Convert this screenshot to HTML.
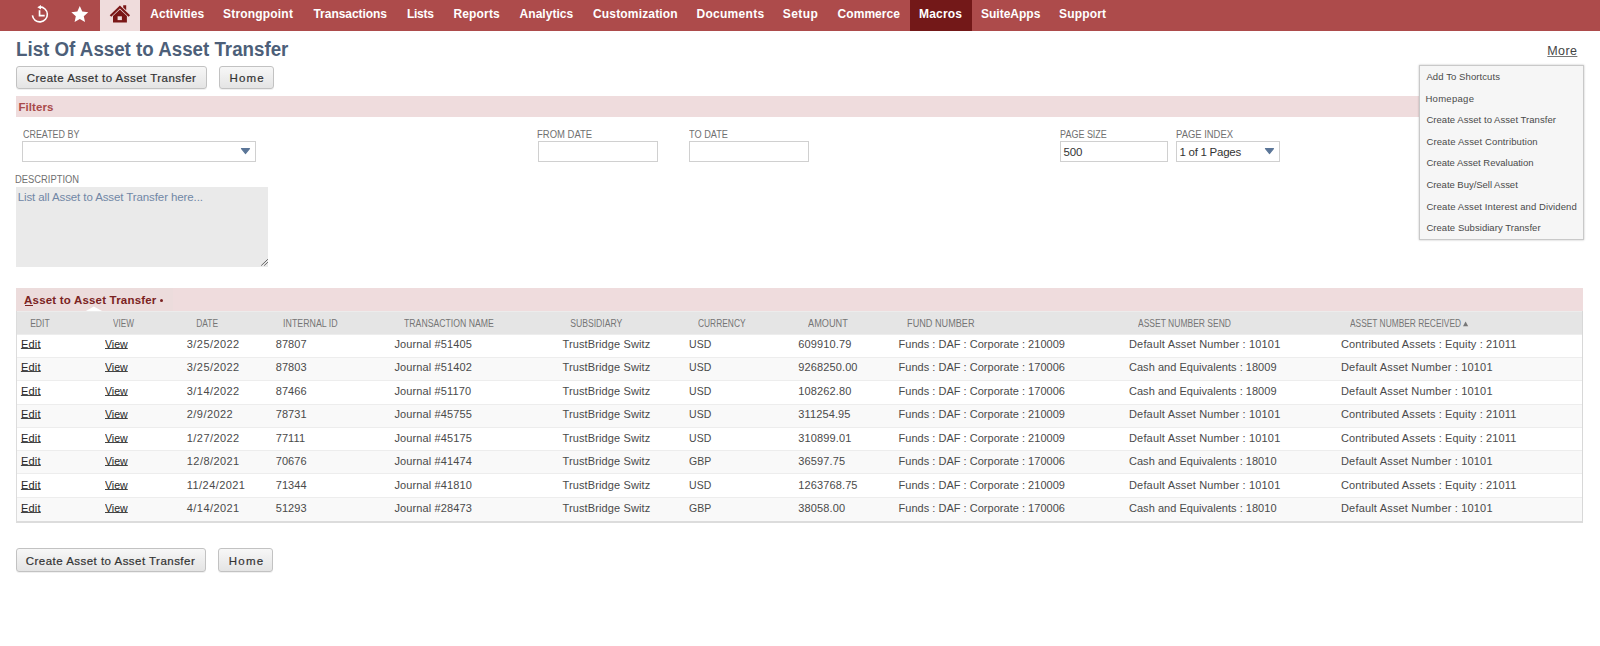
<!DOCTYPE html>
<html><head><meta charset="utf-8">
<style>
html,body{margin:0;padding:0;background:#fff;width:1600px;height:646px;overflow:hidden;position:relative;font-family:"Liberation Sans",sans-serif;}
.t{position:absolute;white-space:nowrap;line-height:normal;}
.abs{position:absolute;}
#nav{position:absolute;left:0;top:0;width:1600px;height:31px;background:#ad4b4b;}
#homebg{position:absolute;left:100px;top:0;width:40px;height:31px;background:#efdcdc;}
#macbg{position:absolute;left:909.5px;top:0;width:62.5px;height:31px;background:#731818;}
.btn{position:absolute;box-sizing:border-box;border:1px solid #c2c2c2;border-radius:3px;background:linear-gradient(#f7f7f7,#e4e4e4);box-shadow:0 1px 0 rgba(0,0,0,0.06);}
.inp{position:absolute;box-sizing:border-box;border:1px solid #d0d0d0;border-radius:0;background:#fff;}
.tri{position:absolute;width:0;height:0;border-left:5px solid transparent;border-right:5px solid transparent;border-top:5px solid #5f7494;}
#filters{position:absolute;left:16px;top:96px;width:1567px;height:21px;background:#efdcdd;}
#ta{position:absolute;left:16px;top:187px;width:252px;height:80px;background:#eaeaea;}
#menu{position:absolute;left:1419px;top:65px;width:165px;height:175px;box-sizing:border-box;background:#f6f6f6;border:1px solid #c9c9c9;box-shadow:0 0 2px rgba(0,0,0,0.25);}
#sect{position:absolute;left:16px;top:288px;width:1567px;height:23px;background:#efdcdd;}
#tab{position:absolute;left:16px;top:288px;width:157px;height:23px;background:#ecdcdc;}
#thead{position:absolute;left:16px;top:311px;width:1567px;height:23px;background:#e5e5e5;border-top:1px solid #ececec;box-sizing:border-box;}
.row{position:absolute;left:17px;width:1565px;box-sizing:border-box;border-top:1px solid #ededed;}
#tbl{position:absolute;left:16px;top:311px;width:1567px;height:212px;box-sizing:border-box;border-left:1px solid #dcdcdc;border-right:1px solid #d8d8d8;border-bottom:2px solid #dcdcdc;}
</style></head><body>
<div id="nav"></div>
<div id="homebg"></div>
<div id="macbg"></div>
<svg class="abs" style="left:0;top:0" width="140" height="30" viewBox="0 0 140 30">
  <!-- history -->
  <path d="M39.8 6.9 A7.5 7.5 0 1 1 32.4 15.4" fill="none" stroke="#fff" stroke-width="1.6"/>
  <path d="M37.3 7.2 L41 4.9 L41 9.4 Z" fill="#fff"/>
  <path d="M39.55 10.3 V15.6 H44.7" fill="none" stroke="#fff" stroke-width="1.7"/>
  <!-- star -->
  <path d="M79.80 6.00 L82.26 11.52 L88.26 12.15 L83.78 16.19 L85.03 22.10 L79.80 19.08 L74.57 22.10 L75.82 16.19 L71.34 12.15 L77.34 11.52 Z" fill="#fff"/>
  <!-- home -->
  <path d="M110.5 16 L119.9 7 L129.3 16" fill="none" stroke="#7a1717" stroke-width="2.2" stroke-linejoin="miter"/>
  <path d="M123.2 5.2 H126.2 V10.2 L123.2 7.4 Z" fill="#7a1717"/>
  <path d="M113 22.4 V16 L119.9 9.6 L126.9 16 V22.4 Z" fill="#7a1717"/>
  <rect x="117.6" y="16.3" width="4.3" height="3.8" fill="#efdcdc"/>
</svg>

<div class="btn" style="left:16px;top:66px;width:191px;height:23px;"></div>
<div class="btn" style="left:219px;top:66px;width:55px;height:23px;"></div>
<div class="btn" style="left:16px;top:548px;width:190px;height:24px;"></div>
<div class="btn" style="left:218px;top:548px;width:55px;height:24px;"></div>

<div id="filters"></div>
<div class="inp" style="left:22px;top:141px;width:234px;height:21px;"></div>
<svg class="abs" style="left:239px;top:147px" width="13" height="8" viewBox="0 0 13 8"><path d="M2.6 1.6 H10.4 L6.5 6.4 Z" fill="#5b7698" stroke="#5b7698" stroke-width="1.4" stroke-linejoin="round"/></svg>
<div class="inp" style="left:538px;top:141px;width:120px;height:21px;"></div>
<div class="inp" style="left:689px;top:141px;width:120px;height:21px;"></div>
<div class="inp" style="left:1060px;top:141px;width:108px;height:21px;"></div>
<div class="inp" style="left:1176px;top:141px;width:104px;height:21px;"></div>
<svg class="abs" style="left:1263px;top:147px" width="13" height="8" viewBox="0 0 13 8"><path d="M2.6 1.6 H10.4 L6.5 6.4 Z" fill="#5b7698" stroke="#5b7698" stroke-width="1.4" stroke-linejoin="round"/></svg>
<div id="ta"></div>
<svg class="abs" style="left:258px;top:257px" width="10" height="10" viewBox="0 0 10 10">
  <path d="M3.2 8.6 L9.9 2.2 M6.2 8.6 L9.9 5.1" stroke="#666" stroke-width="1"/>
</svg>

<div id="sect"></div>
<div id="tab"></div>
<svg class="abs" style="left:84px;top:305px" width="20" height="7" viewBox="0 0 20 7"><path d="M1 6.5 L9.8 1.5 L19 6.5 Z" fill="#ffffff"/></svg>
<div id="thead"></div>
<div class="row" style="top:333.70px;height:23.27px;background:#ffffff"></div>
<div class="row" style="top:356.97px;height:23.27px;background:#f9f9f9"></div>
<div class="row" style="top:380.24px;height:23.27px;background:#ffffff"></div>
<div class="row" style="top:403.51px;height:23.27px;background:#f9f9f9"></div>
<div class="row" style="top:426.78px;height:23.27px;background:#ffffff"></div>
<div class="row" style="top:450.05px;height:23.27px;background:#f9f9f9"></div>
<div class="row" style="top:473.32px;height:23.27px;background:#ffffff"></div>
<div class="row" style="top:496.59px;height:24.50px;background:#f9f9f9"></div>
<div id="tbl"></div>
<div class="abs" style="left:24.5px;top:305px;width:8px;height:1px;background:#7b2222;"></div>
<div class="abs" style="left:160.3px;top:298.6px;width:3px;height:3px;border-radius:50%;background:#7b2222;"></div>
<svg class="abs" style="left:1462px;top:320px" width="8" height="8" viewBox="0 0 8 8"><path d="M1 6.2 L3.6 1.4 L6.2 6.2 Z" fill="#777"/></svg>

<div id="menu"></div>
<span class="t" style="left:150.30px;top:6.90px;font-size:12px;font-weight:700;color:#fff;letter-spacing:0.056px;">Activities</span>
<span class="t" style="left:223.00px;top:6.90px;font-size:12px;font-weight:700;color:#fff;letter-spacing:0.190px;">Strongpoint</span>
<span class="t" style="left:313.50px;top:6.90px;font-size:12px;font-weight:700;color:#fff;letter-spacing:-0.045px;">Transactions</span>
<span class="t" style="left:407.00px;top:6.90px;font-size:12px;font-weight:700;color:#fff;letter-spacing:-0.300px;">Lists</span>
<span class="t" style="left:453.40px;top:6.90px;font-size:12px;font-weight:700;color:#fff;letter-spacing:0.167px;">Reports</span>
<span class="t" style="left:519.60px;top:6.90px;font-size:12px;font-weight:700;color:#fff;letter-spacing:0.037px;">Analytics</span>
<span class="t" style="left:593.00px;top:6.90px;font-size:12px;font-weight:700;color:#fff;letter-spacing:0.167px;">Customization</span>
<span class="t" style="left:696.50px;top:6.90px;font-size:12px;font-weight:700;color:#fff;letter-spacing:0.281px;">Documents</span>
<span class="t" style="left:782.75px;top:6.90px;font-size:12px;font-weight:700;color:#fff;letter-spacing:0.438px;">Setup</span>
<span class="t" style="left:837.50px;top:6.90px;font-size:12px;font-weight:700;color:#fff;letter-spacing:0.071px;">Commerce</span>
<span class="t" style="left:919.00px;top:6.90px;font-size:12px;font-weight:700;color:#fff;letter-spacing:0.200px;">Macros</span>
<span class="t" style="left:981.00px;top:6.90px;font-size:12px;font-weight:700;color:#fff;letter-spacing:0.000px;">SuiteApps</span>
<span class="t" style="left:1059.00px;top:6.90px;font-size:12px;font-weight:700;color:#fff;letter-spacing:0.167px;">Support</span>
<span class="t" style="left:15.90px;top:37.80px;font-size:20px;font-weight:700;color:#4d5f79;letter-spacing:0.000px;transform:scaleX(0.9362);transform-origin:1.00px 0;">List Of Asset to Asset Transfer</span>
<span class="t" style="left:26.75px;top:72.40px;font-size:11.5px;font-weight:400;color:#333;letter-spacing:0.478px;-webkit-text-stroke:0.2px #333;">Create Asset to Asset Transfer</span>
<span class="t" style="left:229.60px;top:72.40px;font-size:11.5px;font-weight:400;color:#333;letter-spacing:1.133px;-webkit-text-stroke:0.2px #333;">Home</span>
<span class="t" style="left:25.80px;top:555.25px;font-size:11.5px;font-weight:400;color:#333;letter-spacing:0.469px;-webkit-text-stroke:0.2px #333;">Create Asset to Asset Transfer</span>
<span class="t" style="left:228.70px;top:555.25px;font-size:11.5px;font-weight:400;color:#333;letter-spacing:1.267px;-webkit-text-stroke:0.2px #333;">Home</span>
<span class="t" style="left:1547.30px;top:44.35px;font-size:12.5px;font-weight:400;color:#444;letter-spacing:0.400px;text-decoration:underline;text-decoration-color:#777;">More</span>
<span class="t" style="left:18.50px;top:101.00px;font-size:11.5px;font-weight:700;color:#a94a4a;letter-spacing:0.067px;">Filters</span>
<span class="t" style="left:22.50px;top:128.80px;font-size:10px;font-weight:400;color:#707070;letter-spacing:0.000px;transform:scaleX(0.8929);transform-origin:0.00px 0;">CREATED BY</span>
<span class="t" style="left:537.40px;top:128.80px;font-size:10px;font-weight:400;color:#707070;letter-spacing:0.000px;transform:scaleX(0.9474);transform-origin:1.00px 0;">FROM DATE</span>
<span class="t" style="left:689.40px;top:128.80px;font-size:10px;font-weight:400;color:#707070;letter-spacing:0.000px;transform:scaleX(0.9190);transform-origin:0.00px 0;">TO DATE</span>
<span class="t" style="left:1059.90px;top:128.80px;font-size:10px;font-weight:400;color:#707070;letter-spacing:0.000px;transform:scaleX(0.8980);transform-origin:1.00px 0;">PAGE SIZE</span>
<span class="t" style="left:1175.90px;top:128.80px;font-size:10px;font-weight:400;color:#707070;letter-spacing:0.000px;transform:scaleX(0.9424);transform-origin:1.00px 0;">PAGE INDEX</span>
<span class="t" style="left:15.10px;top:174.10px;font-size:10px;font-weight:400;color:#707070;letter-spacing:0.000px;transform:scaleX(0.9358);transform-origin:1.00px 0;">DESCRIPTION</span>
<span class="t" style="left:1063.40px;top:145.60px;font-size:11.5px;font-weight:400;color:#333;letter-spacing:-0.050px;">500</span>
<span class="t" style="left:1179.50px;top:145.60px;font-size:11.5px;font-weight:400;color:#333;letter-spacing:-0.264px;">1 of 1 Pages</span>
<span class="t" style="left:17.70px;top:191.20px;font-size:11.5px;font-weight:400;color:#7187a6;letter-spacing:-0.100px;">List all Asset to Asset Transfer here...</span>
<span class="t" style="left:1426.40px;top:70.90px;font-size:9.5px;font-weight:400;color:#4a4a4a;letter-spacing:0.093px;">Add To Shortcuts</span>
<span class="t" style="left:1425.40px;top:92.50px;font-size:9.5px;font-weight:400;color:#4a4a4a;letter-spacing:0.300px;">Homepage</span>
<span class="t" style="left:1426.40px;top:114.10px;font-size:9.5px;font-weight:400;color:#4a4a4a;letter-spacing:0.041px;">Create Asset to Asset Transfer</span>
<span class="t" style="left:1426.40px;top:135.70px;font-size:9.5px;font-weight:400;color:#4a4a4a;letter-spacing:0.125px;">Create Asset Contribution</span>
<span class="t" style="left:1426.40px;top:157.30px;font-size:9.5px;font-weight:400;color:#4a4a4a;letter-spacing:-0.004px;">Create Asset Revaluation</span>
<span class="t" style="left:1426.40px;top:178.90px;font-size:9.5px;font-weight:400;color:#4a4a4a;letter-spacing:-0.025px;">Create Buy/Sell Asset</span>
<span class="t" style="left:1426.40px;top:200.50px;font-size:9.5px;font-weight:400;color:#4a4a4a;letter-spacing:0.109px;">Create Asset Interest and Dividend</span>
<span class="t" style="left:1426.40px;top:222.10px;font-size:9.5px;font-weight:400;color:#4a4a4a;letter-spacing:0.048px;">Create Subsidiary Transfer</span>
<span class="t" style="left:24.10px;top:293.75px;font-size:11.5px;font-weight:700;color:#7b2222;letter-spacing:0.191px;">Asset to Asset Transfer</span>
<span class="t" style="left:29.60px;top:317.80px;font-size:10px;font-weight:400;color:#757575;letter-spacing:0.000px;transform:scaleX(0.8545);transform-origin:1.00px 0;">EDIT</span>
<span class="t" style="left:113.10px;top:317.80px;font-size:10px;font-weight:400;color:#757575;letter-spacing:0.000px;transform:scaleX(0.8192);transform-origin:0.00px 0;">VIEW</span>
<span class="t" style="left:195.60px;top:317.80px;font-size:10px;font-weight:400;color:#757575;letter-spacing:0.000px;transform:scaleX(0.8440);transform-origin:1.00px 0;">DATE</span>
<span class="t" style="left:282.80px;top:317.80px;font-size:10px;font-weight:400;color:#757575;letter-spacing:0.000px;transform:scaleX(0.8820);transform-origin:1.00px 0;">INTERNAL ID</span>
<span class="t" style="left:403.75px;top:317.80px;font-size:10px;font-weight:400;color:#757575;letter-spacing:0.000px;transform:scaleX(0.8689);transform-origin:0.00px 0;">TRANSACTION NAME</span>
<span class="t" style="left:569.75px;top:317.80px;font-size:10px;font-weight:400;color:#757575;letter-spacing:0.000px;transform:scaleX(0.8644);transform-origin:1.00px 0;">SUBSIDIARY</span>
<span class="t" style="left:697.50px;top:317.80px;font-size:10px;font-weight:400;color:#757575;letter-spacing:0.000px;transform:scaleX(0.8393);transform-origin:0.00px 0;">CURRENCY</span>
<span class="t" style="left:807.50px;top:317.80px;font-size:10px;font-weight:400;color:#757575;letter-spacing:0.000px;transform:scaleX(0.9186);transform-origin:0.00px 0;">AMOUNT</span>
<span class="t" style="left:907.00px;top:317.80px;font-size:10px;font-weight:400;color:#757575;letter-spacing:0.000px;transform:scaleX(0.9132);transform-origin:1.00px 0;">FUND NUMBER</span>
<span class="t" style="left:1138.00px;top:317.80px;font-size:10px;font-weight:400;color:#757575;letter-spacing:0.000px;transform:scaleX(0.8509);transform-origin:0.00px 0;">ASSET NUMBER SEND</span>
<span class="t" style="left:1350.00px;top:317.80px;font-size:10px;font-weight:400;color:#757575;letter-spacing:0.000px;transform:scaleX(0.8371);transform-origin:0.00px 0;">ASSET NUMBER RECEIVED</span>
<span class="t" style="left:20.90px;top:337.90px;font-size:11px;font-weight:400;color:#262626;letter-spacing:0.233px;text-decoration:underline;text-underline-offset:0px;text-decoration-color:#444;">Edit</span>
<span class="t" style="left:105.00px;top:337.90px;font-size:11px;font-weight:400;color:#262626;letter-spacing:0.000px;transform:scaleX(0.9625);transform-origin:0.00px 0;text-decoration:underline;text-underline-offset:0px;text-decoration-color:#444;">View</span>
<span class="t" style="left:186.80px;top:337.90px;font-size:11px;font-weight:400;color:#4a4a4a;letter-spacing:0.438px;">3/25/2022</span>
<span class="t" style="left:275.70px;top:337.90px;font-size:11px;font-weight:400;color:#4a4a4a;letter-spacing:0.100px;">87807</span>
<span class="t" style="left:394.50px;top:337.90px;font-size:11px;font-weight:400;color:#4a4a4a;letter-spacing:0.115px;">Journal #51405</span>
<span class="t" style="left:562.50px;top:337.90px;font-size:11px;font-weight:400;color:#4a4a4a;letter-spacing:0.125px;">TrustBridge Switz</span>
<span class="t" style="left:688.50px;top:337.90px;font-size:11px;font-weight:400;color:#4a4a4a;letter-spacing:0.000px;transform:scaleX(0.9545);transform-origin:1.00px 0;">USD</span>
<span class="t" style="left:798.25px;top:337.90px;font-size:11px;font-weight:400;color:#4a4a4a;letter-spacing:0.125px;">609910.79</span>
<span class="t" style="left:898.50px;top:337.90px;font-size:11px;font-weight:400;color:#4a4a4a;letter-spacing:0.024px;">Funds : DAF : Corporate : 210009</span>
<span class="t" style="left:1129.00px;top:337.90px;font-size:11px;font-weight:400;color:#4a4a4a;letter-spacing:0.167px;">Default Asset Number : 10101</span>
<span class="t" style="left:1341.00px;top:337.90px;font-size:11px;font-weight:400;color:#4a4a4a;letter-spacing:0.125px;">Contributed Assets : Equity : 21011</span>
<span class="t" style="left:20.90px;top:361.37px;font-size:11px;font-weight:400;color:#262626;letter-spacing:0.233px;text-decoration:underline;text-underline-offset:0px;text-decoration-color:#444;">Edit</span>
<span class="t" style="left:105.00px;top:361.37px;font-size:11px;font-weight:400;color:#262626;letter-spacing:0.000px;transform:scaleX(0.9625);transform-origin:0.00px 0;text-decoration:underline;text-underline-offset:0px;text-decoration-color:#444;">View</span>
<span class="t" style="left:186.80px;top:361.37px;font-size:11px;font-weight:400;color:#4a4a4a;letter-spacing:0.438px;">3/25/2022</span>
<span class="t" style="left:275.70px;top:361.37px;font-size:11px;font-weight:400;color:#4a4a4a;letter-spacing:0.100px;">87803</span>
<span class="t" style="left:394.50px;top:361.37px;font-size:11px;font-weight:400;color:#4a4a4a;letter-spacing:0.115px;">Journal #51402</span>
<span class="t" style="left:562.50px;top:361.37px;font-size:11px;font-weight:400;color:#4a4a4a;letter-spacing:0.125px;">TrustBridge Switz</span>
<span class="t" style="left:688.50px;top:361.37px;font-size:11px;font-weight:400;color:#4a4a4a;letter-spacing:0.000px;transform:scaleX(0.9545);transform-origin:1.00px 0;">USD</span>
<span class="t" style="left:798.25px;top:361.37px;font-size:11px;font-weight:400;color:#4a4a4a;letter-spacing:0.125px;">9268250.00</span>
<span class="t" style="left:898.50px;top:361.37px;font-size:11px;font-weight:400;color:#4a4a4a;letter-spacing:0.024px;">Funds : DAF : Corporate : 170006</span>
<span class="t" style="left:1129.00px;top:361.37px;font-size:11px;font-weight:400;color:#4a4a4a;letter-spacing:0.028px;">Cash and Equivalents : 18009</span>
<span class="t" style="left:1341.00px;top:361.37px;font-size:11px;font-weight:400;color:#4a4a4a;letter-spacing:0.176px;">Default Asset Number : 10101</span>
<span class="t" style="left:20.90px;top:384.84px;font-size:11px;font-weight:400;color:#262626;letter-spacing:0.233px;text-decoration:underline;text-underline-offset:0px;text-decoration-color:#444;">Edit</span>
<span class="t" style="left:105.00px;top:384.84px;font-size:11px;font-weight:400;color:#262626;letter-spacing:0.000px;transform:scaleX(0.9625);transform-origin:0.00px 0;text-decoration:underline;text-underline-offset:0px;text-decoration-color:#444;">View</span>
<span class="t" style="left:186.80px;top:384.84px;font-size:11px;font-weight:400;color:#4a4a4a;letter-spacing:0.438px;">3/14/2022</span>
<span class="t" style="left:275.70px;top:384.84px;font-size:11px;font-weight:400;color:#4a4a4a;letter-spacing:0.100px;">87466</span>
<span class="t" style="left:394.50px;top:384.84px;font-size:11px;font-weight:400;color:#4a4a4a;letter-spacing:0.115px;">Journal #51170</span>
<span class="t" style="left:562.50px;top:384.84px;font-size:11px;font-weight:400;color:#4a4a4a;letter-spacing:0.125px;">TrustBridge Switz</span>
<span class="t" style="left:688.50px;top:384.84px;font-size:11px;font-weight:400;color:#4a4a4a;letter-spacing:0.000px;transform:scaleX(0.9545);transform-origin:1.00px 0;">USD</span>
<span class="t" style="left:798.25px;top:384.84px;font-size:11px;font-weight:400;color:#4a4a4a;letter-spacing:0.125px;">108262.80</span>
<span class="t" style="left:898.50px;top:384.84px;font-size:11px;font-weight:400;color:#4a4a4a;letter-spacing:0.024px;">Funds : DAF : Corporate : 170006</span>
<span class="t" style="left:1129.00px;top:384.84px;font-size:11px;font-weight:400;color:#4a4a4a;letter-spacing:0.028px;">Cash and Equivalents : 18009</span>
<span class="t" style="left:1341.00px;top:384.84px;font-size:11px;font-weight:400;color:#4a4a4a;letter-spacing:0.176px;">Default Asset Number : 10101</span>
<span class="t" style="left:20.90px;top:408.31px;font-size:11px;font-weight:400;color:#262626;letter-spacing:0.233px;text-decoration:underline;text-underline-offset:0px;text-decoration-color:#444;">Edit</span>
<span class="t" style="left:105.00px;top:408.31px;font-size:11px;font-weight:400;color:#262626;letter-spacing:0.000px;transform:scaleX(0.9625);transform-origin:0.00px 0;text-decoration:underline;text-underline-offset:0px;text-decoration-color:#444;">View</span>
<span class="t" style="left:186.80px;top:408.31px;font-size:11px;font-weight:400;color:#4a4a4a;letter-spacing:0.438px;">2/9/2022</span>
<span class="t" style="left:275.70px;top:408.31px;font-size:11px;font-weight:400;color:#4a4a4a;letter-spacing:0.100px;">78731</span>
<span class="t" style="left:394.50px;top:408.31px;font-size:11px;font-weight:400;color:#4a4a4a;letter-spacing:0.115px;">Journal #45755</span>
<span class="t" style="left:562.50px;top:408.31px;font-size:11px;font-weight:400;color:#4a4a4a;letter-spacing:0.125px;">TrustBridge Switz</span>
<span class="t" style="left:688.50px;top:408.31px;font-size:11px;font-weight:400;color:#4a4a4a;letter-spacing:0.000px;transform:scaleX(0.9545);transform-origin:1.00px 0;">USD</span>
<span class="t" style="left:798.25px;top:408.31px;font-size:11px;font-weight:400;color:#4a4a4a;letter-spacing:0.125px;">311254.95</span>
<span class="t" style="left:898.50px;top:408.31px;font-size:11px;font-weight:400;color:#4a4a4a;letter-spacing:0.024px;">Funds : DAF : Corporate : 210009</span>
<span class="t" style="left:1129.00px;top:408.31px;font-size:11px;font-weight:400;color:#4a4a4a;letter-spacing:0.167px;">Default Asset Number : 10101</span>
<span class="t" style="left:1341.00px;top:408.31px;font-size:11px;font-weight:400;color:#4a4a4a;letter-spacing:0.125px;">Contributed Assets : Equity : 21011</span>
<span class="t" style="left:20.90px;top:431.78px;font-size:11px;font-weight:400;color:#262626;letter-spacing:0.233px;text-decoration:underline;text-underline-offset:0px;text-decoration-color:#444;">Edit</span>
<span class="t" style="left:105.00px;top:431.78px;font-size:11px;font-weight:400;color:#262626;letter-spacing:0.000px;transform:scaleX(0.9625);transform-origin:0.00px 0;text-decoration:underline;text-underline-offset:0px;text-decoration-color:#444;">View</span>
<span class="t" style="left:186.80px;top:431.78px;font-size:11px;font-weight:400;color:#4a4a4a;letter-spacing:0.438px;">1/27/2022</span>
<span class="t" style="left:275.70px;top:431.78px;font-size:11px;font-weight:400;color:#4a4a4a;letter-spacing:0.100px;">77111</span>
<span class="t" style="left:394.50px;top:431.78px;font-size:11px;font-weight:400;color:#4a4a4a;letter-spacing:0.115px;">Journal #45175</span>
<span class="t" style="left:562.50px;top:431.78px;font-size:11px;font-weight:400;color:#4a4a4a;letter-spacing:0.125px;">TrustBridge Switz</span>
<span class="t" style="left:688.50px;top:431.78px;font-size:11px;font-weight:400;color:#4a4a4a;letter-spacing:0.000px;transform:scaleX(0.9545);transform-origin:1.00px 0;">USD</span>
<span class="t" style="left:798.25px;top:431.78px;font-size:11px;font-weight:400;color:#4a4a4a;letter-spacing:0.125px;">310899.01</span>
<span class="t" style="left:898.50px;top:431.78px;font-size:11px;font-weight:400;color:#4a4a4a;letter-spacing:0.024px;">Funds : DAF : Corporate : 210009</span>
<span class="t" style="left:1129.00px;top:431.78px;font-size:11px;font-weight:400;color:#4a4a4a;letter-spacing:0.167px;">Default Asset Number : 10101</span>
<span class="t" style="left:1341.00px;top:431.78px;font-size:11px;font-weight:400;color:#4a4a4a;letter-spacing:0.125px;">Contributed Assets : Equity : 21011</span>
<span class="t" style="left:20.90px;top:455.25px;font-size:11px;font-weight:400;color:#262626;letter-spacing:0.233px;text-decoration:underline;text-underline-offset:0px;text-decoration-color:#444;">Edit</span>
<span class="t" style="left:105.00px;top:455.25px;font-size:11px;font-weight:400;color:#262626;letter-spacing:0.000px;transform:scaleX(0.9625);transform-origin:0.00px 0;text-decoration:underline;text-underline-offset:0px;text-decoration-color:#444;">View</span>
<span class="t" style="left:186.80px;top:455.25px;font-size:11px;font-weight:400;color:#4a4a4a;letter-spacing:0.438px;">12/8/2021</span>
<span class="t" style="left:275.70px;top:455.25px;font-size:11px;font-weight:400;color:#4a4a4a;letter-spacing:0.100px;">70676</span>
<span class="t" style="left:394.50px;top:455.25px;font-size:11px;font-weight:400;color:#4a4a4a;letter-spacing:0.115px;">Journal #41474</span>
<span class="t" style="left:562.50px;top:455.25px;font-size:11px;font-weight:400;color:#4a4a4a;letter-spacing:0.125px;">TrustBridge Switz</span>
<span class="t" style="left:688.50px;top:455.25px;font-size:11px;font-weight:400;color:#4a4a4a;letter-spacing:0.000px;transform:scaleX(0.9545);transform-origin:1.00px 0;">GBP</span>
<span class="t" style="left:798.25px;top:455.25px;font-size:11px;font-weight:400;color:#4a4a4a;letter-spacing:0.125px;">36597.75</span>
<span class="t" style="left:898.50px;top:455.25px;font-size:11px;font-weight:400;color:#4a4a4a;letter-spacing:0.024px;">Funds : DAF : Corporate : 170006</span>
<span class="t" style="left:1129.00px;top:455.25px;font-size:11px;font-weight:400;color:#4a4a4a;letter-spacing:0.028px;">Cash and Equivalents : 18010</span>
<span class="t" style="left:1341.00px;top:455.25px;font-size:11px;font-weight:400;color:#4a4a4a;letter-spacing:0.176px;">Default Asset Number : 10101</span>
<span class="t" style="left:20.90px;top:478.72px;font-size:11px;font-weight:400;color:#262626;letter-spacing:0.233px;text-decoration:underline;text-underline-offset:0px;text-decoration-color:#444;">Edit</span>
<span class="t" style="left:105.00px;top:478.72px;font-size:11px;font-weight:400;color:#262626;letter-spacing:0.000px;transform:scaleX(0.9625);transform-origin:0.00px 0;text-decoration:underline;text-underline-offset:0px;text-decoration-color:#444;">View</span>
<span class="t" style="left:186.80px;top:478.72px;font-size:11px;font-weight:400;color:#4a4a4a;letter-spacing:0.438px;">11/24/2021</span>
<span class="t" style="left:275.70px;top:478.72px;font-size:11px;font-weight:400;color:#4a4a4a;letter-spacing:0.100px;">71344</span>
<span class="t" style="left:394.50px;top:478.72px;font-size:11px;font-weight:400;color:#4a4a4a;letter-spacing:0.115px;">Journal #41810</span>
<span class="t" style="left:562.50px;top:478.72px;font-size:11px;font-weight:400;color:#4a4a4a;letter-spacing:0.125px;">TrustBridge Switz</span>
<span class="t" style="left:688.50px;top:478.72px;font-size:11px;font-weight:400;color:#4a4a4a;letter-spacing:0.000px;transform:scaleX(0.9545);transform-origin:1.00px 0;">USD</span>
<span class="t" style="left:798.25px;top:478.72px;font-size:11px;font-weight:400;color:#4a4a4a;letter-spacing:0.125px;">1263768.75</span>
<span class="t" style="left:898.50px;top:478.72px;font-size:11px;font-weight:400;color:#4a4a4a;letter-spacing:0.024px;">Funds : DAF : Corporate : 210009</span>
<span class="t" style="left:1129.00px;top:478.72px;font-size:11px;font-weight:400;color:#4a4a4a;letter-spacing:0.167px;">Default Asset Number : 10101</span>
<span class="t" style="left:1341.00px;top:478.72px;font-size:11px;font-weight:400;color:#4a4a4a;letter-spacing:0.125px;">Contributed Assets : Equity : 21011</span>
<span class="t" style="left:20.90px;top:502.19px;font-size:11px;font-weight:400;color:#262626;letter-spacing:0.233px;text-decoration:underline;text-underline-offset:0px;text-decoration-color:#444;">Edit</span>
<span class="t" style="left:105.00px;top:502.19px;font-size:11px;font-weight:400;color:#262626;letter-spacing:0.000px;transform:scaleX(0.9625);transform-origin:0.00px 0;text-decoration:underline;text-underline-offset:0px;text-decoration-color:#444;">View</span>
<span class="t" style="left:186.80px;top:502.19px;font-size:11px;font-weight:400;color:#4a4a4a;letter-spacing:0.438px;">4/14/2021</span>
<span class="t" style="left:275.70px;top:502.19px;font-size:11px;font-weight:400;color:#4a4a4a;letter-spacing:0.100px;">51293</span>
<span class="t" style="left:394.50px;top:502.19px;font-size:11px;font-weight:400;color:#4a4a4a;letter-spacing:0.115px;">Journal #28473</span>
<span class="t" style="left:562.50px;top:502.19px;font-size:11px;font-weight:400;color:#4a4a4a;letter-spacing:0.125px;">TrustBridge Switz</span>
<span class="t" style="left:688.50px;top:502.19px;font-size:11px;font-weight:400;color:#4a4a4a;letter-spacing:0.000px;transform:scaleX(0.9545);transform-origin:1.00px 0;">GBP</span>
<span class="t" style="left:798.25px;top:502.19px;font-size:11px;font-weight:400;color:#4a4a4a;letter-spacing:0.125px;">38058.00</span>
<span class="t" style="left:898.50px;top:502.19px;font-size:11px;font-weight:400;color:#4a4a4a;letter-spacing:0.024px;">Funds : DAF : Corporate : 170006</span>
<span class="t" style="left:1129.00px;top:502.19px;font-size:11px;font-weight:400;color:#4a4a4a;letter-spacing:0.028px;">Cash and Equivalents : 18010</span>
<span class="t" style="left:1341.00px;top:502.19px;font-size:11px;font-weight:400;color:#4a4a4a;letter-spacing:0.176px;">Default Asset Number : 10101</span>
</body></html>
